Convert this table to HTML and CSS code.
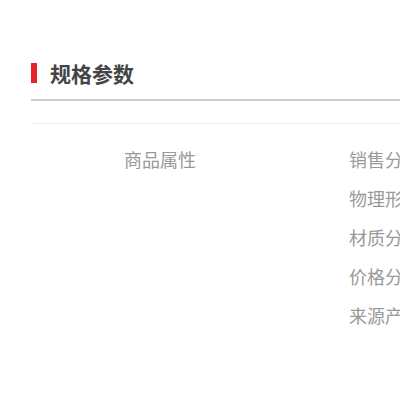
FILE: index.html
```html
<!DOCTYPE html>
<html lang="zh-CN">
<head>
    <meta charset="UTF-8">
    <meta name="viewport" content="width=device-width, initial-scale=1.0">
    <title>规格参数</title>
    <link rel="stylesheet" href="styles.css">
</head>
<body>
    <div class="spec">
        <h2 class="spec-title">规格参数</h2>
        <div class="spec-table">
            <div class="spec-group">商品属性</div>
            <ul class="spec-list">
                <li>销售分类</li>
                <li>物理形态</li>
                <li>材质分类</li>
                <li>价格分类</li>
                <li>来源产地</li>
            </ul>
        </div>
    </div>
</body>
</html>
```
FILE: styles.css
```css
body {
    margin: 0;
    padding: 0;
    background-color: #fff;
    font-family: "Noto Sans CJK SC", "Noto Sans", sans-serif;
    overflow: hidden;
}
.spec {
    width: 700px;
    margin-top: 53px;
    margin-left: 31px;
}
.spec-title {
    display: flex;
    align-items: center;
    margin: 0;
    height: 40px;
    padding-bottom: 6px;
    border-bottom: 2px solid #ccc;
    font-size: 21px;
    font-weight: bold;
    color: #444;
}
.spec-title::before {
    content: "";
    width: 6px;
    height: 20px;
    margin-right: 13px;
    background-color: #e4262c;
}
.spec-table {
    display: flex;
    margin-top: 22px;
    padding-top: 16px;
    border-top: 1px solid #eee;
}
.spec-group {
    width: 258px;
    text-align: center;
    font-size: 18px;
    line-height: 39px;
    color: #999;
}
.spec-list {
    list-style: none;
    margin: 0 0 0 60px;
    padding: 0;
}
.spec-list li {
    font-size: 18px;
    line-height: 39px;
    color: #999;
}
```
